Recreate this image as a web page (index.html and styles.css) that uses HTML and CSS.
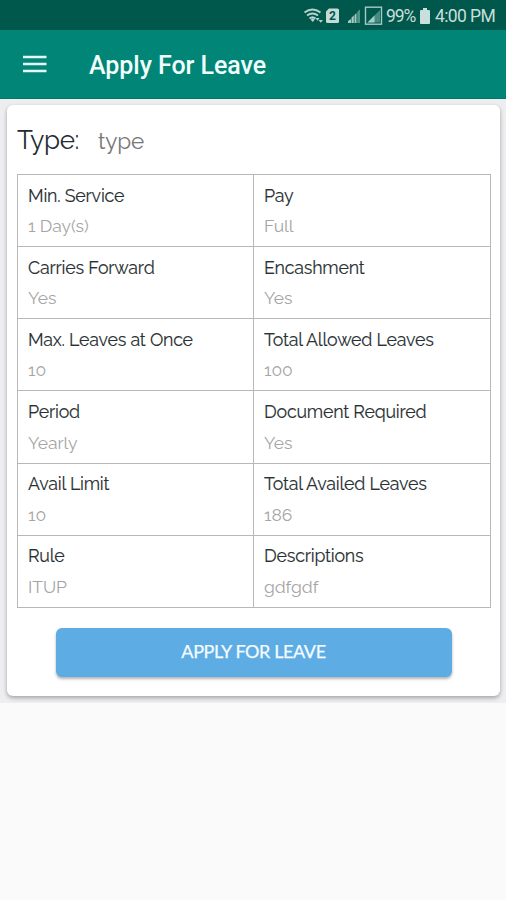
FILE: index.html
```html
<!DOCTYPE html>
<html lang="en">
<head>
<meta charset="utf-8">
<meta name="viewport" content="width=device-width, initial-scale=1">
<title>Apply For Leave</title>
<link rel="stylesheet" href="styles.css">
</head>
<body>
<div class="status">
  <svg class="status-icons" width="80" height="20" viewBox="0 0 80 20">
    <g fill="none" stroke="#b5d2cd" stroke-width="1.9">
      <path d="M1.5 6.5Q9.5 .3 17.500 6.500M4 9.600Q9.500 5.200 15 9.600M6.500 12.500Q9.500 10 12.500 12.500"/>
    </g>
    <path d="M7.600 13.600L9.700 12L11.800 13.600L9.700 16Z" fill="#b5d2cd"/>
    <path d="M12.500 12h4l-2 2.800ZM15.500 14h4.500l-2.200 2.800Z" fill="#b5d2cd"/>
    <path d="M26 2.500h8.500a1.500 1.500 0 0 1 1.500 1.500v11.500a1.500 1.500 0 0 1-1.500 1.500h-10a1.500 1.500 0 0 1-1.500-1.500v-10Z" fill="#c4dcd8"/>
    <text class="sim" x="29.500" y="14" text-anchor="middle">2</text>
    <path d="M45 17v-2l3-2v4ZM48.500 17v-5.500l2.300-2v7.500ZM51.500 17v-8l2-2v10Z" fill="#a5cbc4"/>
    <path d="M54.200 17v-11l2.800-2.800v13.800Z" fill="#54938a"/>
    <rect x="62.500" y="1.200" width="16" height="17" fill="none" stroke="#a9c9c4" stroke-width="1.400"/>
    <path d="M64.500 16.500L77 4v12.500Z" fill="#468b80"/>
    <path d="M64.500 16.500L71.500 9.500v7Z" fill="#a5cbc4"/>
  </svg>
  <span class="battery-text">99%</span>
  <svg class="battery" width="10" height="16" viewBox="0 0 10 16"><path d="M3 0h4v2h2q1 0 1 1v12q0 1-1 1H1q-1 0-1-1V3q0-1 1-1h2Z" fill="#c9dfdb"/></svg>
  <span class="clock">4:00 PM</span>
</div>
<header class="toolbar">
  <svg width="24" height="18" viewBox="0 0 24 18"><path d="M0 2h23.500M0 9h23.500M0 16h23.500" stroke="#e4f8f5" stroke-width="2.700"/></svg>
  <h1>Apply For Leave</h1>
</header>
<main class="content">
  <section class="card">
    <div class="type-row"><span class="type-label">Type:</span><span class="type-value">type</span></div>
    <div class="details">
      <div class="cell"><b>Min. Service</b><i>1 Day(s)</i></div>
      <div class="cell"><b>Pay</b><i>Full</i></div>
      <div class="cell"><b>Carries Forward</b><i>Yes</i></div>
      <div class="cell"><b>Encashment</b><i>Yes</i></div>
      <div class="cell"><b>Max. Leaves at Once</b><i>10</i></div>
      <div class="cell"><b>Total Allowed Leaves</b><i>100</i></div>
      <div class="cell"><b>Period</b><i>Yearly</i></div>
      <div class="cell"><b>Document Required</b><i>Yes</i></div>
      <div class="cell"><b>Avail Limit</b><i>10</i></div>
      <div class="cell"><b>Total Availed Leaves</b><i>186</i></div>
      <div class="cell"><b>Rule</b><i>ITUP</i></div>
      <div class="cell"><b>Descriptions</b><i>gdfgdf</i></div>
    </div>
    <button class="apply">APPLY FOR LEAVE</button>
  </section>
</main>
</body>
</html>
```
FILE: styles.css
```css
* { box-sizing: border-box; }
body { margin: 0; min-height: 900px; background: #fafafa; font-family: Raleway, Lato, sans-serif; }
.status { height: 30px; background: #00574b; display: flex; align-items: center; padding-left: 303px; padding-top: 2px; color: #c9dfdb; font: 18px/28px Roboto, sans-serif; white-space: nowrap; }
.status-icons { flex: none; }
.sim { font: bold 12px Roboto, sans-serif; fill: #00574b; }
.battery-text { margin-left: 3px; width: 30px; font-size: 17.5px; letter-spacing: -1.1px; }
.battery { flex: none; margin-left: 4px; }
.clock { margin-left: 5px; font-size: 17.5px; letter-spacing: -.6px; }
.toolbar { height: 69px; background: #008577; border-bottom: 1px solid #00796c; display: flex; align-items: center; padding-left: 23px; }
.toolbar h1 { margin: 3px 0 0 42px; color: #f1fffd; font: 500 25px/32px Roboto, sans-serif; letter-spacing: -.05px; }
.content { height: 604px; padding: 6px 6px 7px 7px; background: #eeeef0; }
.card { height: 591px; padding: 21px 9px 0 10px; border-radius: 6px; background: #fff; box-shadow: 0 2px 4px rgba(0,0,0,.32); }
.type-row { height: 48px; display: flex; align-items: baseline; }
.type-label { width: 81px; color: #252b30; font-size: 26px; line-height: 28px; letter-spacing: -.4px; }
.type-value { color: #777; font-size: 22.500px; font-weight: 400; letter-spacing: -.2px; }
.details { height: 434px; display: grid; grid-template-columns: 236px 237px; grid-template-rows: repeat(6, 1fr); border-top: 1px solid #b8b8b8; border-left: 1px solid #b8b8b8; }
.cell { border-right: 1px solid #b8b8b8; border-bottom: 1px solid #b8b8b8; padding: 8.600px 10px 6px; display: flex; flex-direction: column; }
.cell b { color: #293033; font-weight: 400; font-size: 17.800px; line-height: 24px; letter-spacing: -.2px; -webkit-text-stroke: .12px #293033; white-space: nowrap; }
.cell i { margin-top: 6.500px; color: #a5a5a5; font-weight: 400; font-style: normal; font-size: 17.500px; line-height: 24px; letter-spacing: -.05px; }
.apply { display: block; width: 396px; height: 49px; margin: 20px 0 0 38.500px; padding: 0 0 3px; border: 0; border-radius: 6px; background: #5dade4; box-shadow: 0 2px 3px rgba(0,0,0,.3); color: #f5fbff; font: 400 18px Lato, sans-serif; letter-spacing: -.4px; -webkit-text-stroke: .25px #f5fbff; }
```
